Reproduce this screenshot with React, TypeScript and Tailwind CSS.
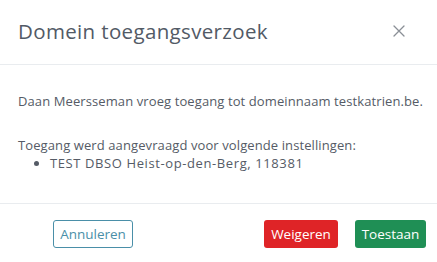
export default function App() {
  return (
    <div
      className="flex h-[262px] w-[437px] flex-col bg-white text-[#555b66]"
      style={{ fontFamily: '"Open Sans", Lato, sans-serif' }}
    >
      {/* Header */}
      <div className="flex h-[65px] items-start justify-between border-b border-[#e9ecef] pt-[19px] pl-[18px] pr-[32px]">
        <h1 className="text-[20.5px] font-normal leading-[24px] tracking-[0.35px] text-[#525a66]">
          Domein toegangsverzoek
        </h1>
        <button className="mt-[6px] text-[#8a8f96]" aria-label="Sluiten">
          <svg width="12" height="12" viewBox="0 0 12 12" fill="none">
            <path
              d="M1 1L11 11M11 1L1 11"
              stroke="currentColor"
              strokeWidth="1.3"
              strokeLinecap="round"
            />
          </svg>
        </button>
      </div>

      {/* Body */}
      <div className="flex h-[139px] flex-col whitespace-nowrap border-b border-[#e9ecef] pl-[18px] pr-[8px] pt-[27px] text-[13px] leading-[18px] tracking-[0.1px]">
        <p>Daan Meersseman vroeg toegang tot domeinnaam testkatrien.be.</p>
        <p className="mt-[26px]">Toegang werd aangevraagd voor volgende instellingen:</p>
        <ul className="list-disc pl-[32px]">
          <li className="tracking-[0.6px]">TEST DBSO Heist-op-den-Berg, 118381</li>
        </ul>
      </div>

      {/* Footer */}
      <div className="flex flex-1 items-start pt-[16px] pl-[53px] pr-[11px]">
        <button className="h-[28px] w-[80px] rounded-[3px] border border-[#4a8fa8] text-[13.5px] text-[#4a8fa8]">
          Annuleren
        </button>
        <div className="ml-auto flex gap-[17px]">
          <button className="h-[28px] w-[74px] rounded-[3px] bg-[#df2427] text-[13.5px] text-white">
            Weigeren
          </button>
          <button className="h-[28px] w-[71px] rounded-[3px] bg-[#1f8f55] text-[13.5px] text-white">
            Toestaan
          </button>
        </div>
      </div>
    </div>
  );
}
